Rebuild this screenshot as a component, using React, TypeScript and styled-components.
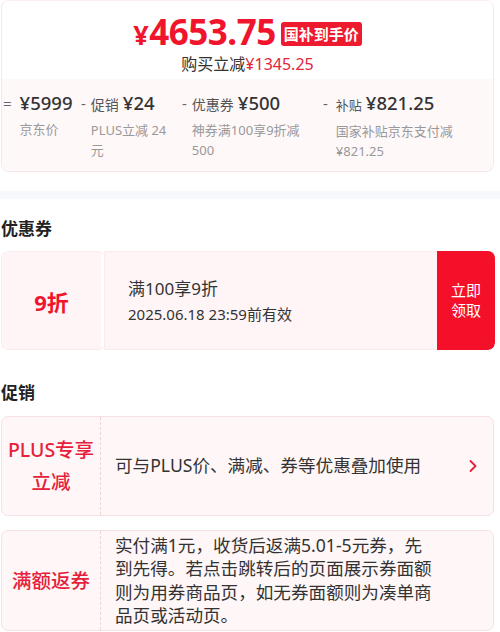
import React from "react";
import styled, { createGlobalStyle } from "styled-components";

const Global = createGlobalStyle`
  html, body { margin: 0; padding: 0; background: #fff; }
  body { font-family: "Noto Sans", "Noto Sans CJK SC", sans-serif; color: #333; width: 500px; }
  * { box-sizing: border-box; }
`;

const RED = "#f0142d";

const Page = styled.div`
  width: 500px;
  display: flex;
  flex-direction: column;
`;

const PriceCard = styled.div`
  margin: 0 6px 0 1px;
  border: 1px solid #f8e6e9;
  border-top-color: #fbeef0;
  border-radius: 8px;
  overflow: hidden;
  height: 172px;
  display: flex;
  flex-direction: column;
`;

const PriceTop = styled.div`
  height: 78px;
  background: #fff;
  display: flex;
  flex-direction: column;
  align-items: center;
  padding-top: 15px;
`;

const PriceRow = styled.div`
  display: flex;
  align-items: center;
  gap: 5px;
  height: 34px;
`;

const BigPrice = styled.span`
  color: ${RED};
  font-weight: 700;
  font-size: 35px;
  line-height: 34px;
  letter-spacing: -0.5px;
  & > i {
    font-style: normal;
    font-size: 27px;
    margin-right: 1px;
  }
`;

const Badge = styled.span`
  background: #ee1a2e;
  color: #fff;
  font-family: "Noto Sans CJK SC", sans-serif;
  font-weight: 700;
  font-size: 15px;
  line-height: 24px;
  height: 24px;
  padding: 0 3px;
  border-radius: 3px;
  margin-top: 1px;
`;

const SaveLine = styled.div`
  font-size: 16px;
  line-height: 22px;
  color: #333;
  margin-top: 2px;
  font-family: "Noto Sans CJK SC", sans-serif;
  & > b {
    font-weight: 400;
    color: #e0253c;
    font-family: "Noto Sans", sans-serif;
  }
`;

const Breakdown = styled.div`
  flex: 1;
  background: #fff8f9;
  position: relative;
  display: flex;
  padding: 12px 0 0 1px;
  &::before {
    content: "";
    position: absolute;
    top: -6px;
    left: 246px;
    border: 6px solid transparent;
    border-bottom-color: #fff8f9;
  }
`;

const Col = styled.div<{ $w: number }>`
  width: ${(p) => p.$w}px;
  flex: none;
  display: grid;
  grid-template-columns: auto 1fr;
  align-content: start;
`;

const Sign = styled.span<{ $gap: number }>`
  color: #666;
  font-size: 15px;
  line-height: 24px;
  padding-right: ${(p) => p.$gap}px;
`;

const ColBody = styled.div<{ $w: number }>`
  display: flex;
  flex-direction: column;
  max-width: ${(p) => p.$w}px;
`;

const ValueLine = styled.div`
  display: flex;
  align-items: baseline;
  gap: 4px;
  white-space: nowrap;
  line-height: 24px;
`;

const ValueLabel = styled.span<{ $small?: boolean }>`
  font-family: "Noto Sans CJK SC", sans-serif;
  font-size: ${(p) => (p.$small ? 13 : 14)}px;
  color: #555;
`;

const Value = styled.span`
  font-size: 18.5px;
  color: #333;
  font-weight: 500;
`;

const SubLabel = styled.div`
  font-family: "Noto Sans", "Noto Sans CJK SC", sans-serif;
  font-size: 13px;
  line-height: 20px;
  color: #999;
  margin-top: 4px;
  word-break: break-all;
`;

const Band = styled.div`
  height: 8px;
  background: #f6f8fb;
  margin-top: 19px;
`;

const Heading = styled.h2`
  margin: 0;
  padding-left: 1px;
  font-family: "Noto Sans CJK SC", sans-serif;
  font-size: 17px;
  font-weight: 700;
  color: #222;
  line-height: 24px;
`;

const Section = styled.section<{ $top: number }>`
  padding-top: ${(p) => p.$top}px;
  display: flex;
  flex-direction: column;
`;

const CouponCard = styled.div`
  margin: 0 5px 0 1px;
  height: 99px;
  display: flex;
  border-radius: 7px;
  overflow: hidden;
  position: relative;
`;

const Stub = styled.div`
  width: 100px;
  background: #fff5f7;
  border: 1px solid #fbeaed;
  border-right: none;
  border-radius: 7px 0 0 7px;
  display: flex;
  align-items: center;
  justify-content: center;
  color: ${RED};
  font-family: "Noto Sans", "Noto Sans CJK SC", sans-serif;
  font-weight: 700;
  font-size: 22px;
`;

const Notch = styled.span<{ $pos: "top" | "bottom" }>`
  position: absolute;
  left: 98px;
  ${(p) => (p.$pos === "top" ? "top: -4px;" : "bottom: -4px;")}
  width: 7px;
  height: 7px;
  border-radius: 50%;
  background: #fff;
  border: 1px solid #fbeaed;
`;

const CouponBody = styled.div`
  flex: 1;
  background: #fff5f6;
  border: 1px solid #fbeaed;
  border-right: none;
  margin-left: 3px;
  display: flex;
  flex-direction: column;
  justify-content: center;
  padding-left: 23px;
  font-family: "Noto Sans", "Noto Sans CJK SC", sans-serif;
`;

const CouponTitle = styled.div`
  font-size: 17px;
  line-height: 24px;
  color: #333;
`;

const CouponDate = styled.div`
  font-size: 15px;
  line-height: 22px;
  color: #333;
  margin-top: 2px;
`;

const ClaimButton = styled.button`
  width: 58px;
  border: none;
  background: #f5102a;
  color: #fff;
  font-family: "Noto Sans CJK SC", sans-serif;
  font-size: 15px;
  line-height: 20px;
  padding: 0 12px;
  border-radius: 0 7px 7px 0;
  margin-top: -1px;
`;

const PromoCard = styled.div<{ $h: number }>`
  margin: 0 6px 0 1px;
  height: ${(p) => p.$h}px;
  border: 1px solid #f7e0e3;
  background: #fff6f7;
  border-radius: 7px;
  display: flex;
  align-items: stretch;
`;

const PromoTag = styled.div`
  width: 99px;
  flex: none;
  border-right: 1px dashed #f0d3d7;
  display: flex;
  align-items: center;
  justify-content: center;
  text-align: center;
  color: #e6203a;
  font-family: "Noto Sans", "Noto Sans CJK SC", sans-serif;
  font-size: 19.5px;
  line-height: 32px;
  font-weight: 500;
  padding: 0 2px;
`;

const PromoText = styled.div<{ $w?: number }>`
  flex: 1;
  display: flex;
  align-items: center;
  padding-left: 14px;
  font-family: "Noto Sans", "Noto Sans CJK SC", sans-serif;
  font-size: 17.6px;
  line-height: 23.5px;
  color: #333;
  & > p {
    margin: 0;
    max-width: ${(p) => p.$w ?? 400}px;
  }
`;

const Chevron = styled.svg`
  flex: none;
  margin: 0 15px 0 auto;
`;

const Gap = styled.div<{ $h: number }>`
  height: ${(p) => p.$h}px;
`;

type Item = { sign: string; gap: number; w: number; bw: number; label?: string; small?: boolean; value: string; sub: string };

const items: Item[] = [
  { sign: "=", gap: 8, w: 78, bw: 60, value: "¥5999", sub: "京东价" },
  { sign: "-", gap: 5, w: 101, bw: 86, label: "促销", value: "¥24", sub: "PLUS立减 24元" },
  { sign: "-", gap: 5, w: 141, bw: 112, label: "优惠券", value: "¥500", sub: "神券满100享9折减500" },
  { sign: "-", gap: 8, w: 150, bw: 122, label: "补贴", small: true, value: "¥821.25", sub: "国家补贴京东支付减¥821.25" },
];

export default function App() {
  return (
    <Page>
      <Global />
      <PriceCard>
        <PriceTop>
          <PriceRow>
            <BigPrice>
              <i>¥</i>4653.75
            </BigPrice>
            <Badge>国补到手价</Badge>
          </PriceRow>
          <SaveLine>
            购买立减<b>¥1345.25</b>
          </SaveLine>
        </PriceTop>
        <Breakdown>
          {items.map((it) => (
            <Col key={it.sub} $w={it.w}>
              <Sign $gap={it.gap}>{it.sign}</Sign>
              <ColBody $w={it.bw}>
                <ValueLine>
                  {it.label && <ValueLabel $small={it.small}>{it.label}</ValueLabel>}
                  <Value>{it.value}</Value>
                </ValueLine>
                <SubLabel>{it.sub}</SubLabel>
              </ColBody>
            </Col>
          ))}
        </Breakdown>
      </PriceCard>
      <Band />
      <Section $top={17}>
        <Heading>优惠券</Heading>
        <Gap $h={11} />
        <CouponCard>
          <Stub>9折</Stub>
          <Notch $pos="top" />
          <Notch $pos="bottom" />
          <CouponBody>
            <CouponTitle>满100享9折</CouponTitle>
            <CouponDate>2025.06.18 23:59前有效</CouponDate>
          </CouponBody>
          <ClaimButton>立即领取</ClaimButton>
        </CouponCard>
      </Section>
      <Section $top={30}>
        <Heading>促销</Heading>
        <Gap $h={12} />
        <PromoCard $h={100}>
          <PromoTag>PLUS专享立减</PromoTag>
          <PromoText>
            <p>可与PLUS价、满减、券等优惠叠加使用</p>
            <Chevron width="10" height="14" viewBox="0 0 10 14">
              <path d="M2.5 2 L7.5 7 L2.5 12" fill="none" stroke="#e8213b" strokeWidth="1.8" strokeLinecap="round" strokeLinejoin="round" />
            </Chevron>
          </PromoText>
        </PromoCard>
        <Gap $h={14} />
        <PromoCard $h={101}>
          <PromoTag>满额返券</PromoTag>
          <PromoText $w={320}>
            <p>实付满1元，收货后返满5.01-5元券，先到先得。若点击跳转后的页面展示券面额则为用券商品页，如无券面额则为凑单商品页或活动页。</p>
          </PromoText>
        </PromoCard>
      </Section>
    </Page>
  );
}
